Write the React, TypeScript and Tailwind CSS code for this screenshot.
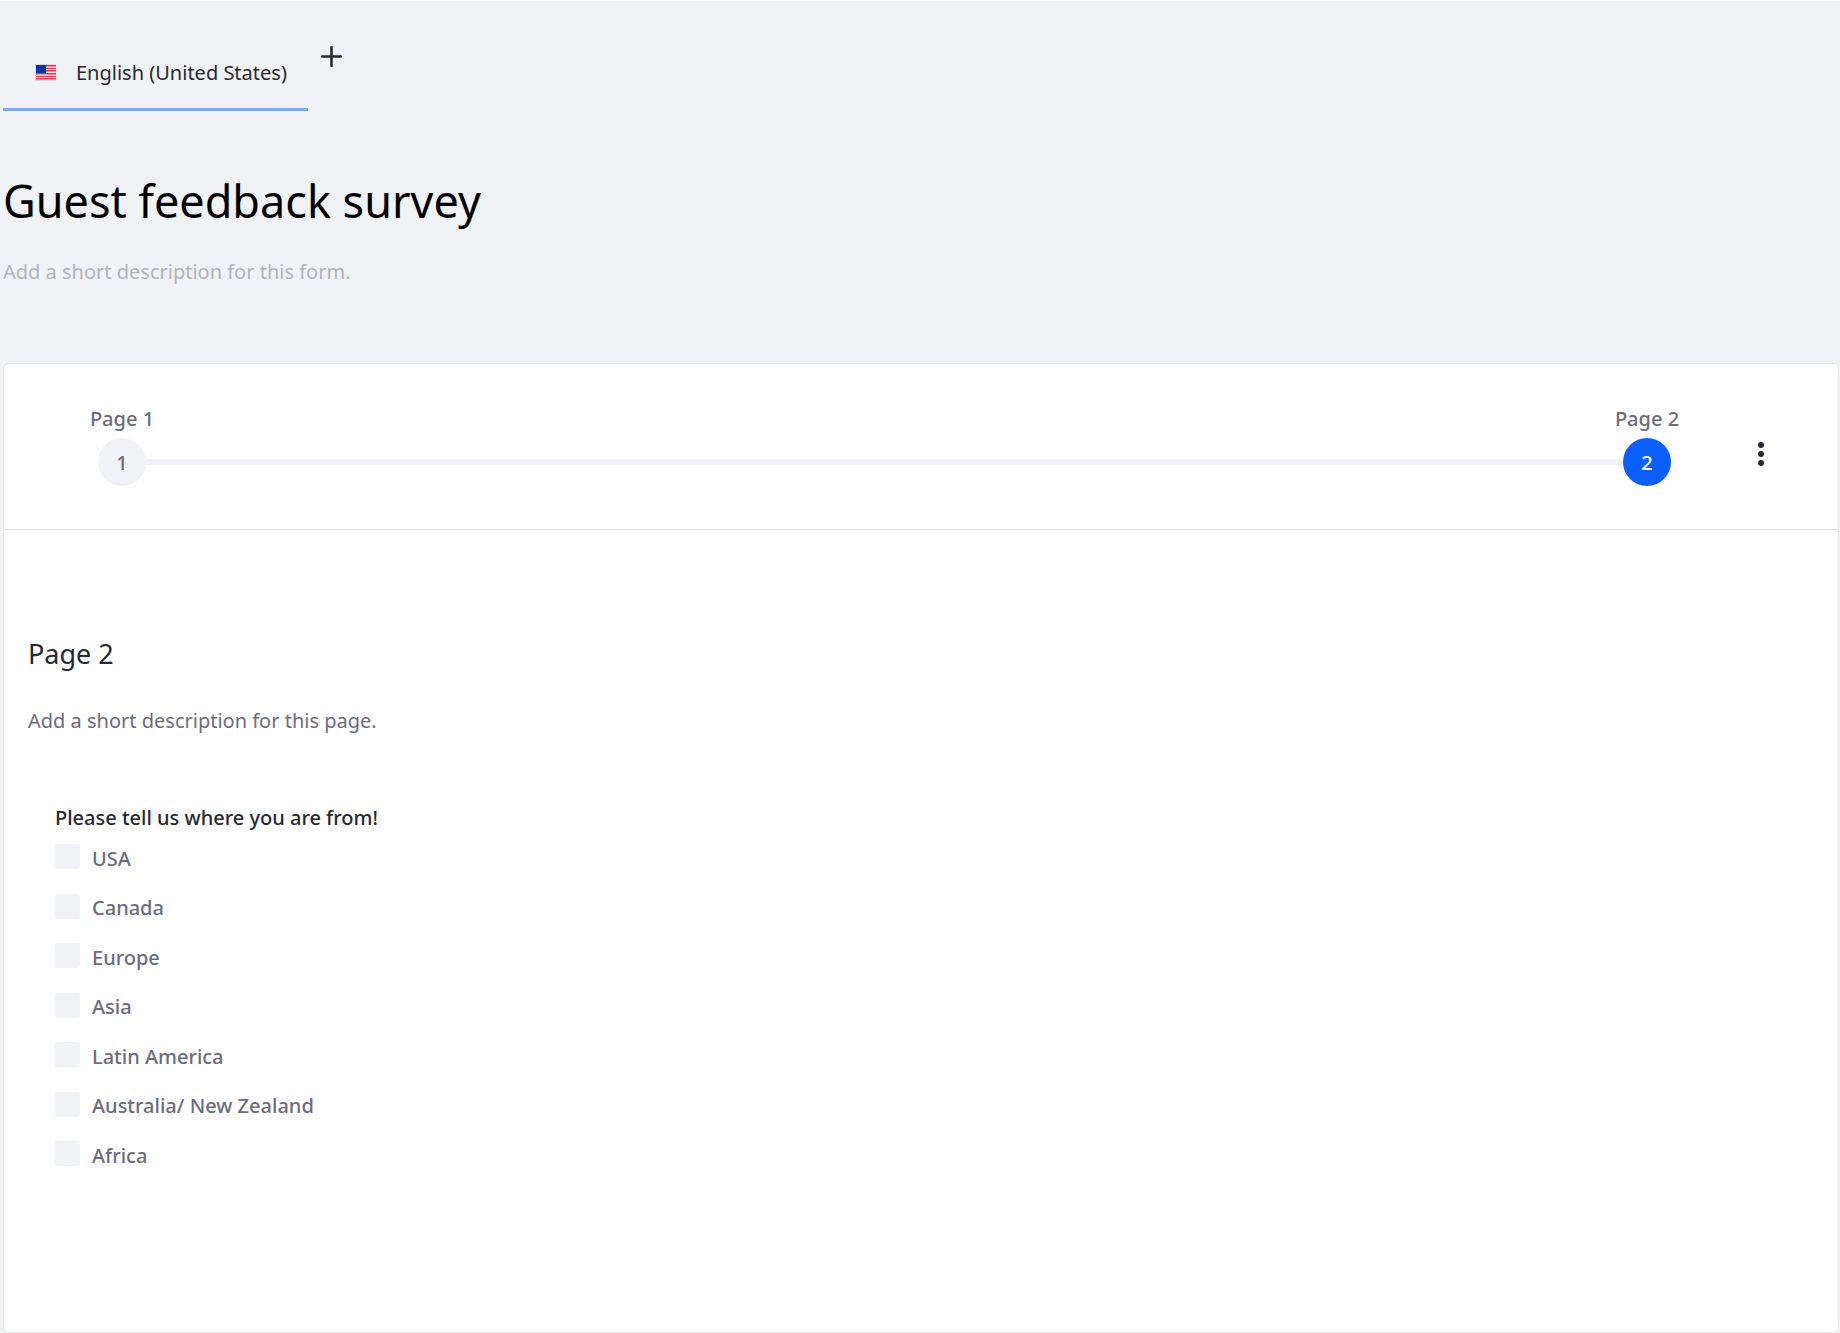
import React from "react";

const regions = ["USA", "Canada", "Europe", "Asia", "Latin America", "Australia/ New Zealand", "Africa"];

function UsFlag() {
  return (
    <svg viewBox="0 0 21 18" className="h-[18px] w-[21px] shrink-0" shapeRendering="crispEdges" aria-hidden="true">
      <rect width="21" height="17" fill="#d9dce6" />
      <rect x="1" y="1" width="19" height="15" fill="#f6eef0" />
      {[1, 4, 6, 9, 12, 14].map((y) => (
        <rect key={y} x="1" y={y} width="20" height="1" fill="#dc3a40" />
      ))}
      {[2, 7, 10, 15].map((y) => (
        <rect key={y} x="1" y={y} width="20" height="1" fill="#ea9094" />
      ))}
      <rect x="1" y="1" width="10" height="8" fill="#0535a0" />
    </svg>
  );
}

function Step({ number, active = false }: { number: number; active?: boolean }) {
  return (
    <button type="button" className="flex w-16 shrink-0 flex-col items-center text-xl leading-6 font-medium text-[#6b6c7e]">
      <span className="whitespace-nowrap">Page {number}</span>
      <span
        className={
          active
            ? "mt-[7px] flex size-12 items-center justify-center rounded-full bg-[#0b5fff] pt-0.5 text-white"
            : "mt-[7px] flex size-12 items-center justify-center rounded-full bg-[#f1f2f5] pt-0.5"
        }
      >
        {number}
      </span>
    </button>
  );
}

export default function App() {
  return (
    <div className="flex min-h-screen flex-col border-t border-white bg-[#f1f2f5] pr-px pl-[3px] font-['Noto_Sans','Open_Sans',sans-serif] text-xl text-[#272833]">
      <header className="flex h-[110px] items-start">
        <button
          type="button"
          className="flex h-[110px] w-[305px] items-center gap-5 border-b-[3px] border-[#80acff] pt-9 pl-8 leading-7 whitespace-nowrap"
        >
          <UsFlag />
          English (United States)
        </button>
        <button type="button" aria-label="Add translation" className="mt-11 ml-3">
          <svg viewBox="0 0 23 23" className="size-[23px]" fill="none" stroke="#272833" strokeWidth="2.6" strokeLinecap="round" aria-hidden="true">
            <path d="M11.5 2.2v18.6M2.2 11.5h18.6" />
          </svg>
        </button>
      </header>

      <div className="flex flex-col pt-[61px]">
        <input
          aria-label="Form title"
          defaultValue="Guest feedback survey"
          className="h-[58px] w-full bg-transparent text-[45px] leading-[58px] text-black outline-none"
        />
        <input
          aria-label="Form description"
          placeholder="Add a short description for this form."
          className="mt-7 h-7 w-full bg-transparent leading-7 outline-none placeholder:text-[#b1b4bb] placeholder:opacity-100"
        />
      </div>

      <main className="mt-[77px] flex grow flex-col rounded-md border border-[#e7e7ed] bg-white">
        <div className="flex h-[166px] items-start border-b border-[#e1e2e6] pt-[43px] pr-[74px] pl-[86px]">
          <Step number={1} />
          <div className="-mx-2 mt-[52px] h-1.5 grow bg-[#f1f2f5]" />
          <Step number={2} active />
          <button type="button" aria-label="Page actions" className="mt-[35px] ml-[79px]">
            <svg viewBox="0 0 6 24" className="h-6 w-1.5" fill="#272833" aria-hidden="true">
              <circle cx="3" cy="3" r="3" />
              <circle cx="3" cy="12" r="3" />
              <circle cx="3" cy="21" r="3" />
            </svg>
          </button>
        </div>

        <div className="flex flex-col px-6 pt-[104px]">
          <input aria-label="Page title" defaultValue="Page 2" className="h-10 bg-transparent text-[27px] leading-10 outline-none" />
          <input
            aria-label="Page description"
            placeholder="Add a short description for this page."
            className="mt-[31px] h-8 bg-transparent leading-8 outline-none placeholder:text-[#6b6c7e] placeholder:opacity-100"
          />
          <fieldset className="mt-[67px] pl-[27px]">
            <legend className="leading-7 font-medium">Please tell us where you are from!</legend>
            <div className="mt-3 flex h-[322px] flex-col justify-between">
              {regions.map((region) => (
                <label key={region} className="flex h-[25px] items-center gap-3 self-start font-medium text-[#6b6c7e]">
                  <input
                    type="checkbox"
                    name="region"
                    value={region}
                    className="size-[25px] appearance-none rounded-[3px] bg-[#f1f2f5] checked:bg-[#0b5fff]"
                  />
                  <span className="pt-1 leading-7">{region}</span>
                </label>
              ))}
            </div>
          </fieldset>
        </div>
      </main>
    </div>
  );
}
